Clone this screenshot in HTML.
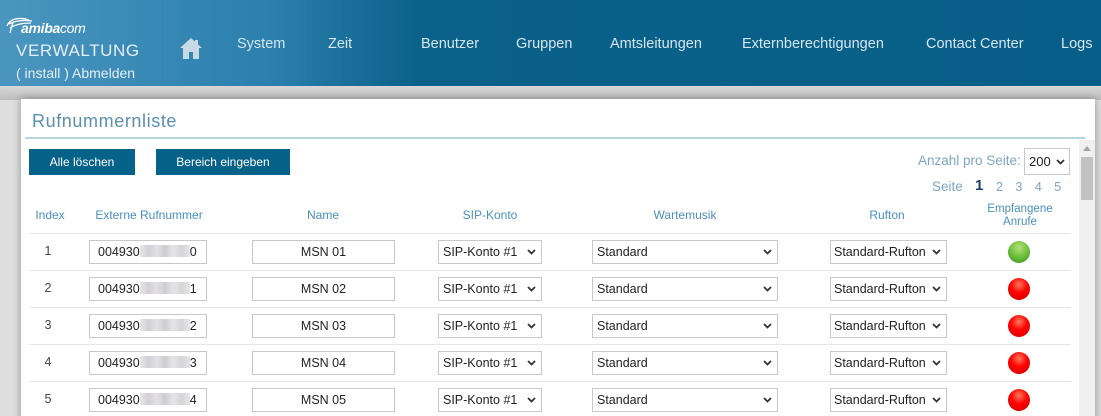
<!DOCTYPE html>
<html><head><meta charset="utf-8"><style>
*{margin:0;padding:0;box-sizing:border-box}
html,body{width:1101px;height:416px;overflow:hidden}
body{background:#dedede;font-family:"Liberation Sans",sans-serif;position:relative}
.a{position:absolute;white-space:nowrap}
#hd{position:absolute;left:0;top:0;width:1101px;height:86px;background:linear-gradient(90deg,#4a96c0 0%,#2a7fac 25%,#0a6189 38%,#075e88 100%)}
.nav{color:#d6e6ef;font-size:14.5px;top:36px}
#shadow{position:absolute;left:0;top:86px;width:1101px;height:14px;background:linear-gradient(#d8d8d8,#bdbdbd)}
#panel{position:absolute;left:21px;top:99px;width:1074px;height:330px;background:#fff;box-shadow:0 0 8px rgba(0,0,0,.35)}
.btn{position:absolute;top:149px;height:26px;background:#07628a;color:#fff;font-size:12px;text-align:center;line-height:26px}
.th{color:#4a8fbf;font-size:12px;top:208px;text-align:center}
.line{position:absolute;left:29px;width:1042px;height:1px;background:#e6e6e6}
.box{position:absolute;height:24px;border:1px solid #c8c8c8;background:#fff;font-size:12.5px;color:#222;line-height:22px;white-space:nowrap;overflow:hidden}
.sel{padding-left:4px}
.sel svg{position:absolute;right:5px;top:8px}
.idx{color:#444;font-size:12.5px;width:20px;text-align:center}
.led{position:absolute;width:22px;height:22px;border-radius:50%}
.red{background:radial-gradient(circle at 50% 30%,#ff7a5a 0%,#f00 45%,#c00 100%)}
.grn{background:radial-gradient(circle at 50% 30%,#b6e07a 0%,#6cbf3a 50%,#3f8f22 100%)}
.blur{display:inline-block;width:50px;height:12px;vertical-align:-1px;background:linear-gradient(90deg,#e6e6e8,#d2d0d4,#e2e0e4,#cfcdd1,#e5e5e7,#d6d4d8,#e6e6e6)}
</style></head><body>
<div id="hd">
<svg class="a" style="left:4px;top:14px" width="30" height="20" viewBox="0 0 30 20"><path d="M3 12 C6 4 16 3 25 6 M5 10 C12 6 20 6 28 7 M6 14 C12 10 20 9 27 9 M9 8 L6 19" stroke="#fff" stroke-width="1.3" fill="none"/></svg>
<div class="a" style="left:21px;top:20px;color:#fff;font-size:14px;font-style:italic;letter-spacing:-.3px"><b style="font-weight:bold">amiba</b>com</div>
<div class="a" style="left:16px;top:41px;color:#e6eef3;font-size:17px;letter-spacing:.6px">VERWALTUNG</div>
<div class="a" style="left:16px;top:65px;color:#e6eef3;font-size:14px">( install ) Abmelden</div>
<svg class="a" style="left:179px;top:37px" width="24" height="23" viewBox="0 0 24 23"><path d="M12 1 L23 11 L20 11 L20 22 L14 22 L14 15 L10 15 L10 22 L4 22 L4 11 L1 11 Z" fill="#c8dae4"/><rect x="16" y="3" width="3" height="6" fill="#c8dae4"/></svg>
<div class="a nav" style="left:237px">System</div>
<div class="a nav" style="left:328px">Zeit</div>
<div class="a nav" style="left:421px">Benutzer</div>
<div class="a nav" style="left:516px">Gruppen</div>
<div class="a nav" style="left:610px">Amtsleitungen</div>
<div class="a nav" style="left:742px">Externberechtigungen</div>
<div class="a nav" style="left:926px">Contact Center</div>
<div class="a nav" style="left:1061px">Logs</div>
</div>
<div id="shadow"></div>
<div id="panel"></div>
<div class="a" style="left:32px;top:111px;color:#5a8fae;font-size:18px;letter-spacing:.6px">Rufnummernliste</div>
<div class="a" style="left:25px;top:137px;width:1060px;height:2px;background:#b8d3e0"></div>
<div class="btn" style="left:29px;width:106px">Alle löschen</div>
<div class="btn" style="left:156px;width:134px">Bereich eingeben</div>
<div class="a" style="left:918px;top:153px;color:#7ea6c2;font-size:13.5px">Anzahl pro Seite:</div>
<div class="box sel" style="left:1024px;top:148px;width:46px;height:27px;line-height:25px;font-size:13px">200<svg width="9" height="6" viewBox="0 0 9 6" style="top:10px;right:4px"><path d="M1 1 L4.5 4.5 L8 1" stroke="#333" stroke-width="1.8" fill="none"/></svg></div>
<div class="a" style="left:932px;top:179px;color:#7ea6c2;font-size:13.5px">Seite</div>
<div class="a" style="left:975px;top:177px;color:#1c3f6e;font-size:15px;font-weight:bold">1</div>
<div class="a" style="left:996px;top:180px;color:#7ea6c2;font-size:12.5px;word-spacing:9px">2 3 4 5</div>
<div class="a" style="left:1079px;top:140px;width:16px;height:276px;background:#f0f0f0"></div>
<svg class="a" style="left:1083px;top:146px" width="8" height="5"><path d="M0 5 L4 0 L8 5Z" fill="#a3a3a3"/></svg>
<div class="a" style="left:1081px;top:157px;width:12px;height:43px;background:#c1c1c1"></div>
<div class="a th" style="left:30px;width:40px">Index</div>
<div class="a th" style="left:89px;width:120px">Externe Rufnummer</div>
<div class="a th" style="left:290px;width:66px">Name</div>
<div class="a th" style="left:450px;width:80px">SIP-Konto</div>
<div class="a th" style="left:640px;width:90px">Wartemusik</div>
<div class="a th" style="left:850px;width:74px">Rufton</div>
<div class="a th" style="left:975px;top:203px;width:90px;line-height:13px;font-size:11.5px">Empfangene<br>Anrufe</div>
<div id="rows"></div>
<script>
var h='';var names=['0','1','2','3','4'];
for(var i=0;i<5;i++){var t=240+i*37;
h+='<div class="line" style="top:'+(t-7)+'px"></div>';
h+='<div class="a idx" style="left:38px;top:'+(t+4)+'px">'+(i+1)+'</div>';
h+='<div class="box" style="left:89px;top:'+t+'px;width:118px;padding-left:8px">004930<span class="blur"></span>'+names[i]+'</div>';
h+='<div class="box" style="left:252px;top:'+t+'px;width:143px;text-align:center">MSN 0'+(i+1)+'</div>';
var ch='<svg width="9" height="6" viewBox="0 0 9 6"><path d="M1 1 L4.5 4.5 L8 1" stroke="#333" stroke-width="1.8" fill="none"/></svg>';
h+='<div class="box sel" style="left:438px;top:'+t+'px;width:104px">SIP-Konto #1'+ch+'</div>';
h+='<div class="box sel" style="left:592px;top:'+t+'px;width:186px">Standard'+ch+'</div>';
h+='<div class="box sel" style="left:830px;top:'+t+'px;width:117px;padding-left:3px">Standard-Rufton'+ch+'</div>';
h+='<div class="led '+(i==0?'grn':'red')+'" style="left:1008px;top:'+(t+1)+'px"></div>';}
document.getElementById('rows').innerHTML=h;
</script>
</body></html>
